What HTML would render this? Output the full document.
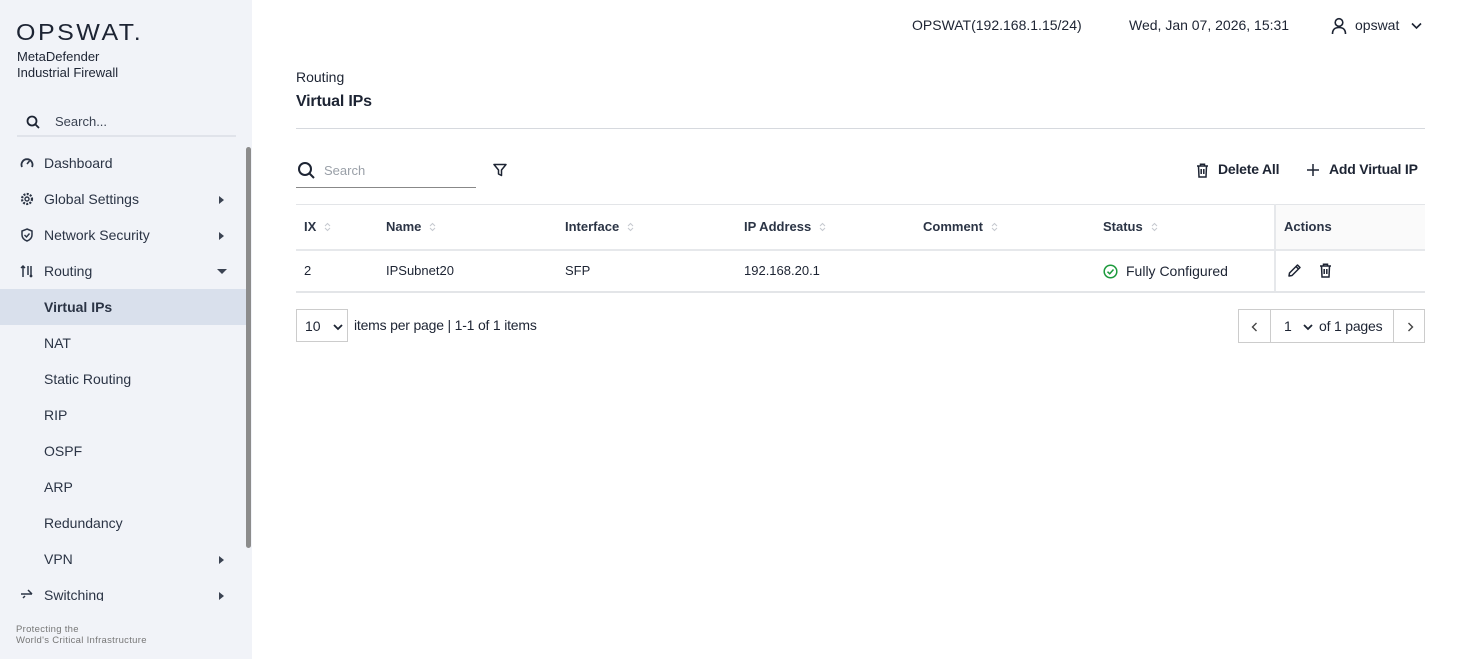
<!DOCTYPE html>
<html><head><meta charset="utf-8"><style>
*{box-sizing:border-box;margin:0;padding:0}
body{width:1462px;height:659px;overflow:hidden;font-family:"Liberation Sans",Arial,sans-serif;color:#1d2433;background:#fff;position:relative}
.side{position:absolute;left:0;top:0;width:252px;height:659px;background:#f1f3f8}
.sb{position:absolute;left:246px;top:147px;width:5px;height:401px;background:#8c8c8c;border-radius:3px}
.logo{position:absolute;left:16px;top:20px;font-size:25px;letter-spacing:2.5px;color:#1d2433;font-weight:normal;transform:scaleY(.92);transform-origin:top left}
.sub{position:absolute;left:17px;top:49px;font-size:13px;line-height:16px;color:#1d2433}
.ss{position:absolute;left:17px;top:108px;width:219px;height:29px;border-bottom:2px solid #e0e3ea;font-size:13px;color:#3b4352}
.ss span{position:absolute;left:38px;top:6px}
.item{position:absolute;left:0;width:246px;height:36px;font-size:14px;line-height:36px;color:#2b3445}
.item .t{position:absolute;left:44px}
.item .ic{position:absolute;left:20px;top:11px}
.arr{position:absolute;left:219px;top:15px;width:0;height:0;border-top:4px solid transparent;border-bottom:4px solid transparent;border-left:5px solid #3b4352}
.down{position:absolute;left:217px;top:16px;border-left:5px solid transparent;border-right:5px solid transparent;border-top:5px solid #3b4352}
.act{background:#d9e0ec;font-weight:bold}
.foot{position:absolute;left:16px;top:624px;font-size:9.5px;line-height:11px;color:#777;letter-spacing:.3px}
.top{position:absolute;top:17px;font-size:14px;color:#1d2433}
.bc{position:absolute;left:296px;top:69px;font-size:14px}
.h1{position:absolute;left:296px;top:93px;font-size:16px;font-weight:bold;letter-spacing:-.2px}
.hr{position:absolute;left:296px;top:128px;width:1129px;height:1px;background:#d6d9de}
.srch{position:absolute;left:296px;top:155px;width:180px;height:33px;border-bottom:1px solid #888}
.srch span{position:absolute;left:28px;top:8px;font-size:13px;color:#9aa0a8}
.btn{position:absolute;top:161px;font-size:14px;font-weight:bold;letter-spacing:-.2px}
table{position:absolute;left:296px;top:204px;width:1129px;border-collapse:collapse;font-size:13px}
th{height:45px;text-align:left;font-weight:bold;border-top:1px solid #e3e5e8;border-bottom:2px solid #e6e8eb;padding-left:8px;color:#2b3445}
td{height:42px;border-bottom:2px solid #e3e5e8;padding-left:8px}
.sort{display:inline-block;margin-left:8px;vertical-align:-1px}
.actc{border-left:2px solid #e6e8eb;background:#fafafa}
td.actc{background:#fff}
.pp{position:absolute;left:296px;top:309px;width:52px;height:33px;border:1px solid #ccc;font-size:14px;padding:8px 0 0 8px}
.ipp{position:absolute;left:354px;top:317px;font-size:14px;letter-spacing:-.2px}
.pg{position:absolute;left:1238px;top:309px;width:187px;height:34px;border:1px solid #ccc;font-size:14px}
.pg div{position:absolute;top:0;height:32px;line-height:32px}
</style></head><body>
<div class="side">
<div class="logo">OPSWAT.</div>
<div class="sub">MetaDefender<br>Industrial Firewall</div>
<div class="ss"><svg style="position:absolute;left:9px;top:7px" width="14" height="14" viewBox="0 0 14 14"><circle cx="6" cy="6" r="4.5" fill="none" stroke="#1d2433" stroke-width="1.8"/><path d="M9.5 9.5L13 13" stroke="#1d2433" stroke-width="1.8"/></svg><span>Search...</span></div>
<div class="item" style="top:145px"><svg class="ic" width="14" height="14" viewBox="0 0 14 14"><path d="M2 11A5.5 5.5 0 1 1 12 11" fill="none" stroke="#2b3445" stroke-width="1.8"/><path d="M7 8L9.5 5" stroke="#2b3445" stroke-width="1.6"/></svg><span class="t">Dashboard</span></div>
<div class="item" style="top:181px"><svg class="ic" width="14" height="14" viewBox="0 0 14 14"><circle cx="7" cy="7" r="5" fill="none" stroke="#2b3445" stroke-width="2.2" stroke-dasharray="2 1.3"/><circle cx="7" cy="7" r="2" fill="none" stroke="#2b3445" stroke-width="1.4"/></svg><span class="t">Global Settings</span><i class="arr"></i></div>
<div class="item" style="top:217px"><svg class="ic" width="14" height="14" viewBox="0 0 14 14"><path d="M7 1L12 3V7C12 10 9.5 12 7 13C4.5 12 2 10 2 7V3Z" fill="none" stroke="#2b3445" stroke-width="1.5"/><path d="M4.5 7L6.5 9L9.5 5.5" fill="none" stroke="#2b3445" stroke-width="1.4"/></svg><span class="t">Network Security</span><i class="arr"></i></div>
<div class="item" style="top:253px"><svg class="ic" width="14" height="14" viewBox="0 0 14 14"><path d="M3 13V2M1 4L3 2L5 4M8 2V11M11 2V11" fill="none" stroke="#2b3445" stroke-width="1.5"/><circle cx="11" cy="12" r="1.4" fill="#2b3445"/></svg><span class="t">Routing</span><i class="down"></i></div>
<div class="item act" style="top:289px"><span class="t">Virtual IPs</span></div>
<div class="item" style="top:325px"><span class="t">NAT</span></div>
<div class="item" style="top:361px"><span class="t">Static Routing</span></div>
<div class="item" style="top:397px"><span class="t">RIP</span></div>
<div class="item" style="top:433px"><span class="t">OSPF</span></div>
<div class="item" style="top:469px"><span class="t">ARP</span></div>
<div class="item" style="top:505px"><span class="t">Redundancy</span></div>
<div class="item" style="top:541px"><span class="t">VPN</span><i class="arr"></i></div>
<div class="item" style="top:577px;height:24px;overflow:hidden"><svg class="ic" style="top:12px" width="14" height="10" viewBox="0 0 14 10"><path d="M1 5H12M8 1L12 5M3 9L5 7" fill="none" stroke="#2b3445" stroke-width="1.5"/></svg><span class="t">Switching</span><i class="arr"></i></div>
<div class="foot">Protecting the<br>World's Critical Infrastructure</div>
<div class="sb"></div>
</div>
<div class="top" style="left:912px">OPSWAT(192.168.1.15/24)</div>
<div class="top" style="left:1129px">Wed, Jan 07, 2026, 15:31</div>
<svg style="position:absolute;left:1331px;top:17px" width="16" height="18" viewBox="0 0 16 18"><circle cx="8" cy="5.5" r="3.8" fill="none" stroke="#1d2433" stroke-width="1.6"/><path d="M1.5 17C1.5 12 4.5 10.5 8 10.5S14.5 12 14.5 17" fill="none" stroke="#1d2433" stroke-width="1.6"/></svg>
<div class="top" style="left:1355px">opswat</div>
<svg style="position:absolute;left:1411px;top:22px" width="11" height="8" viewBox="0 0 11 8"><path d="M1 1.5L5.5 6L10 1.5" fill="none" stroke="#1d2433" stroke-width="1.6"/></svg>
<div class="bc">Routing</div>
<div class="h1">Virtual IPs</div>
<div class="hr"></div>
<div class="srch"><svg style="position:absolute;left:1px;top:6px" width="18" height="18" viewBox="0 0 18 18"><circle cx="8" cy="8" r="6" fill="none" stroke="#1d2433" stroke-width="2"/><path d="M12.5 12.5L17 17" stroke="#1d2433" stroke-width="2"/></svg><span>Search</span></div>
<svg style="position:absolute;left:493px;top:163px" width="14" height="14" viewBox="0 0 14 14"><path d="M1 1.5H13L8.5 7V12.5L5.5 11V7Z" fill="none" stroke="#1d2433" stroke-width="1.5" stroke-linejoin="round"/></svg>
<svg style="position:absolute;left:1196px;top:163px" width="13" height="15" viewBox="0 0 13 15"><path d="M1 3H12M4.5 3V1.2H8.5V3M2.5 3L3 14H10L10.5 3M5.2 6V11M7.8 6V11" fill="none" stroke="#1d2433" stroke-width="1.5"/></svg>
<div class="btn" style="left:1218px">Delete All</div>
<svg style="position:absolute;left:1306px;top:163px" width="14" height="14" viewBox="0 0 14 14"><path d="M7 1V13M1 7H13" stroke="#1d2433" stroke-width="1.5"/></svg>
<div class="btn" style="left:1329px">Add Virtual IP</div>
<table>
<tr><th style="width:82px">IX<svg class="sort" width="7" height="10" viewBox="0 0 7 10"><path d="M1 4L3.5 1.5L6 4M1 6L3.5 8.5L6 6" fill="none" stroke="#c5c9cf" stroke-width="1"/></svg></th><th style="width:179px">Name<svg class="sort" width="7" height="10" viewBox="0 0 7 10"><path d="M1 4L3.5 1.5L6 4M1 6L3.5 8.5L6 6" fill="none" stroke="#c5c9cf" stroke-width="1"/></svg></th><th style="width:179px">Interface<svg class="sort" width="7" height="10" viewBox="0 0 7 10"><path d="M1 4L3.5 1.5L6 4M1 6L3.5 8.5L6 6" fill="none" stroke="#c5c9cf" stroke-width="1"/></svg></th><th style="width:179px">IP Address<svg class="sort" width="7" height="10" viewBox="0 0 7 10"><path d="M1 4L3.5 1.5L6 4M1 6L3.5 8.5L6 6" fill="none" stroke="#c5c9cf" stroke-width="1"/></svg></th><th style="width:180px">Comment<svg class="sort" width="7" height="10" viewBox="0 0 7 10"><path d="M1 4L3.5 1.5L6 4M1 6L3.5 8.5L6 6" fill="none" stroke="#c5c9cf" stroke-width="1"/></svg></th><th style="width:180px">Status<svg class="sort" width="7" height="10" viewBox="0 0 7 10"><path d="M1 4L3.5 1.5L6 4M1 6L3.5 8.5L6 6" fill="none" stroke="#c5c9cf" stroke-width="1"/></svg></th><th class="actc">Actions</th></tr>
<tr><td>2</td><td>IPSubnet20</td><td>SFP</td><td>192.168.20.1</td><td></td><td style="font-size:14px;padding-top:0;vertical-align:middle"><svg style="vertical-align:-3px;margin-right:8px" width="15" height="15" viewBox="0 0 15 15"><circle cx="7.5" cy="7.5" r="6.3" fill="none" stroke="#1c9a3c" stroke-width="1.5"/><path d="M4.5 7.7L6.7 9.8L10.5 5.5" fill="none" stroke="#1c9a3c" stroke-width="1.5"/></svg>Fully Configured</td><td class="actc"><svg style="vertical-align:-3px;margin-left:3px" width="15" height="15" viewBox="0 0 15 15"><path d="M2 13L2.5 10L10.5 2L13 4.5L5 12.5Z M9 3.5L11.5 6" fill="none" stroke="#1d2433" stroke-width="1.5" stroke-linejoin="round"/></svg><svg style="vertical-align:-3px;margin-left:17px" width="13" height="15" viewBox="0 0 13 15"><path d="M1 3H12M4.5 3V1.2H8.5V3M2.5 3L3 14H10L10.5 3M5.2 6V11M7.8 6V11" fill="none" stroke="#1d2433" stroke-width="1.5"/></svg></td></tr>
</table>
<div class="pp">10<svg style="position:absolute;left:36px;top:14px" width="10" height="7" viewBox="0 0 10 7"><path d="M1 1L5 5L9 1" fill="none" stroke="#1d2433" stroke-width="1.8"/></svg></div>
<div class="ipp">items per page | 1-1 of 1 items</div>
<div class="pg">
<div style="left:0;width:32px;border-right:1px solid #ccc"><svg style="position:absolute;left:12px;top:12px" width="7" height="10" viewBox="0 0 7 10"><path d="M5.5 1L1.5 5L5.5 9" fill="none" stroke="#444" stroke-width="1.4"/></svg></div>
<div style="left:45px">1</div>
<svg style="position:absolute;left:64px;top:14px" width="10" height="7" viewBox="0 0 10 7"><path d="M1 1L5 5L9 1" fill="none" stroke="#1d2433" stroke-width="1.8"/></svg>
<div style="left:80px;letter-spacing:-.2px">of 1 pages</div>
<div style="left:154px;width:32px;border-left:1px solid #ccc"><svg style="position:absolute;left:13px;top:12px" width="7" height="10" viewBox="0 0 7 10"><path d="M1.5 1L5.5 5L1.5 9" fill="none" stroke="#444" stroke-width="1.4"/></svg></div>
</div>
</body></html>
